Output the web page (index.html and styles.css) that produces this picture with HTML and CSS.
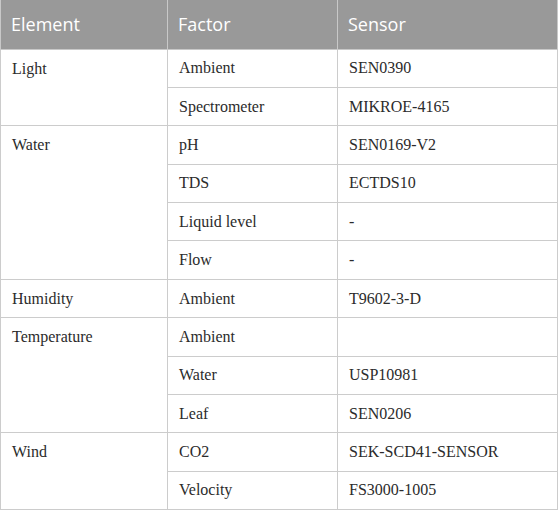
FILE: index.html
```html
<!DOCTYPE html>
<html>
<head>
<meta charset="utf-8">
<link rel="stylesheet" href="styles.css">
</head>
<body>
<table class="data">
  <thead>
    <tr><th class="c1">Element</th><th class="c2">Factor</th><th class="c3">Sensor</th></tr>
  </thead>
  <tbody>
    <tr><td rowspan="2">Light</td><td>Ambient</td><td>SEN0390</td></tr>
    <tr><td>Spectrometer</td><td>MIKROE-4165</td></tr>
    <tr><td rowspan="4">Water</td><td>pH</td><td>SEN0169-V2</td></tr>
    <tr><td>TDS</td><td>ECTDS10</td></tr>
    <tr><td>Liquid level</td><td>-</td></tr>
    <tr><td>Flow</td><td>-</td></tr>
    <tr><td>Humidity</td><td>Ambient</td><td>T9602-3-D</td></tr>
    <tr><td rowspan="3">Temperature</td><td>Ambient</td><td></td></tr>
    <tr><td>Water</td><td>USP10981</td></tr>
    <tr><td>Leaf</td><td>SEN0206</td></tr>
    <tr><td rowspan="2">Wind</td><td>CO2</td><td>SEK-SCD41-SENSOR</td></tr>
    <tr><td>Velocity</td><td>FS3000-1005</td></tr>
  </tbody>
</table>
</body>
</html>
```

FILE: styles.css
```css
html, body {
  margin: 0;
  padding: 0;
  background: #fff;
}
.data {
  width: 558px;
  border-collapse: collapse;
  table-layout: fixed;
}
.c1 { width: 167px; }
.c2 { width: 170px; }
.data th {
  background: #999999;
  color: #fff;
  font-family: "Open Sans", sans-serif;
  font-weight: 400;
  font-size: 18px;
  text-align: left;
  height: 49px;
  padding: 0 10px 1px;
  border: 1px solid #c8c8c8;
  border-top: none;
  box-sizing: border-box;
}
.data td {
  font-family: "Liberation Serif", serif;
  font-size: 16px;
  line-height: 18px;
  color: #2b2b2b;
  height: 38.4px;
  padding: 0 11px;
  vertical-align: middle;
  border: 1px solid #cccccc;
  box-sizing: border-box;
}
.data td[rowspan] {
  vertical-align: top;
  padding-top: 10px;
}
```
